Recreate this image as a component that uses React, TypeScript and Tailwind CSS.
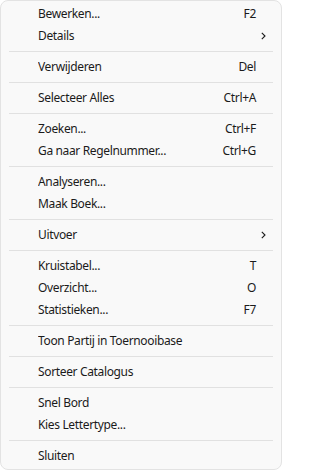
import React from "react";

type Entry =
  | { kind: "item"; label: string; shortcut?: string; submenu?: boolean }
  | { kind: "sep" };

const entries: Entry[] = [
  { kind: "item", label: "Bewerken...", shortcut: "F2" },
  { kind: "item", label: "Details", submenu: true },
  { kind: "sep" },
  { kind: "item", label: "Verwijderen", shortcut: "Del" },
  { kind: "sep" },
  { kind: "item", label: "Selecteer Alles", shortcut: "Ctrl+A" },
  { kind: "sep" },
  { kind: "item", label: "Zoeken...", shortcut: "Ctrl+F" },
  { kind: "item", label: "Ga naar Regelnummer...", shortcut: "Ctrl+G" },
  { kind: "sep" },
  { kind: "item", label: "Analyseren..." },
  { kind: "item", label: "Maak Boek..." },
  { kind: "sep" },
  { kind: "item", label: "Uitvoer", submenu: true },
  { kind: "sep" },
  { kind: "item", label: "Kruistabel...", shortcut: "T" },
  { kind: "item", label: "Overzicht...", shortcut: "O" },
  { kind: "item", label: "Statistieken...", shortcut: "F7" },
  { kind: "sep" },
  { kind: "item", label: "Toon Partij in Toernooibase" },
  { kind: "sep" },
  { kind: "item", label: "Sorteer Catalogus" },
  { kind: "sep" },
  { kind: "item", label: "Snel Bord" },
  { kind: "item", label: "Kies Lettertype..." },
  { kind: "sep" },
  { kind: "item", label: "Sluiten" },
];

function Chevron() {
  return (
    <svg width="5" height="8" viewBox="0 0 5 8" fill="none" className="block">
      <path d="M0.8 0.8 L4 4 L0.8 7.2" stroke="#1b1b1b" strokeWidth="1.1" />
    </svg>
  );
}

export default function App() {
  return (
    <div className="h-[470px] w-[282px] bg-white">
      <div
        className="flex h-full flex-col rounded-lg border border-[#e3e3e3] bg-[#f9f9f9] pt-[2px] text-[12px] tracking-[-0.35px] text-[#1b1b1b]"
        style={{ fontFamily: '"Noto Sans", "Open Sans", sans-serif' }}
      >
        {entries.map((entry, i) =>
          entry.kind === "sep" ? (
            <div key={i} className="py-[4px]">
              <div className="mx-[8px] h-px bg-[#e1e1e1]" />
            </div>
          ) : (
            <div
              key={i}
              className="flex h-[22px] items-center pl-[37px] pr-[15px] leading-[22px]"
            >
              <span className="flex-1 truncate">{entry.label}</span>
              {entry.shortcut ? <span>{entry.shortcut}</span> : null}
              <span className="flex w-[10px] justify-end">
                {entry.submenu ? <Chevron /> : null}
              </span>
            </div>
          )
        )}
      </div>
    </div>
  );
}
